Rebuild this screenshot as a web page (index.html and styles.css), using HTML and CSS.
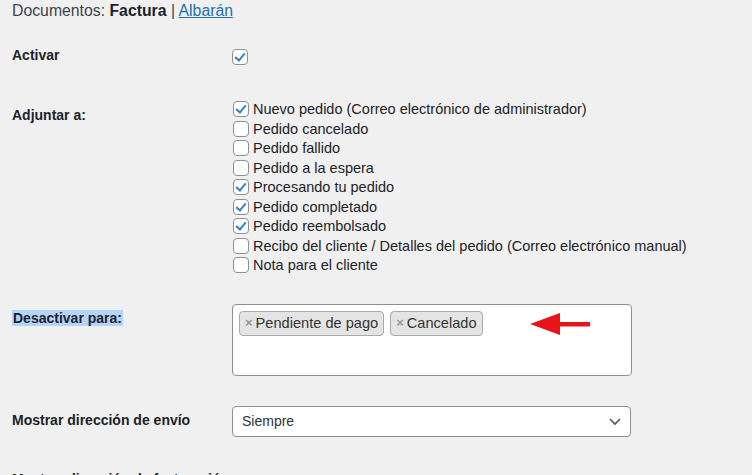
FILE: index.html
```html
<!DOCTYPE html>
<html lang="es">

<head>
  <meta charset="UTF-8">
  <meta name="viewport" content="width=device-width, initial-scale=1.0">
  <title>Ajustes de documentos</title>
  <link rel="stylesheet" href="styles.css">
</head>

<body>

  <div class="doc-switch">
    Documentos: <strong>Factura</strong> | <a href="#">Albarán</a>
  </div>

  <div class="form-row row-activar">
    <div class="row-label">Activar</div>
    <div class="row-field">
      <span class="check is-checked"></span>
    </div>
  </div>

  <div class="form-row row-adjuntar">
    <div class="row-label">Adjuntar a:</div>
    <ul class="check-list">
      <li><span class="check is-checked"></span>Nuevo pedido (Correo electrónico de administrador)</li>
      <li><span class="check"></span>Pedido cancelado</li>
      <li><span class="check"></span>Pedido fallido</li>
      <li><span class="check"></span>Pedido a la espera</li>
      <li><span class="check is-checked"></span>Procesando tu pedido</li>
      <li><span class="check is-checked"></span>Pedido completado</li>
      <li><span class="check is-checked"></span>Pedido reembolsado</li>
      <li><span class="check"></span>Recibo del cliente / Detalles del pedido (Correo electrónico manual)</li>
      <li><span class="check"></span>Nota para el cliente</li>
    </ul>
  </div>

  <div class="form-row row-desactivar">
    <div class="row-label"><span class="selected-text">Desactivar para:</span></div>
    <div class="multi-select">
      <span class="tag"><span class="tag-x">×</span>Pendiente de pago</span>
      <span class="tag"><span class="tag-x">×</span>Cancelado</span>
      <svg class="arrow" width="62" height="26" viewBox="0 0 62 26">
        <polygon points="0,12 30,1 30,23" fill="#e8141a" />
        <rect x="28" y="10" width="32" height="4.5" fill="#e8141a" />
      </svg>
    </div>
  </div>

  <div class="form-row row-envio">
    <div class="row-label">Mostrar dirección de envío</div>
    <div class="select-box">
      <span>Siempre</span>
      <svg width="14" height="10" viewBox="0 0 14 10">
        <path d="M2 3 L7 8 L12 3" fill="none" stroke="#50575e" stroke-width="1.6" />
      </svg>
    </div>
  </div>

  <div class="form-row row-facturacion">
    <div class="row-label">Mostrar dirección de facturación</div>
  </div>

</body>

</html>
```

FILE: styles.css
```css
body {
  font-family: "Liberation Sans", Arial, sans-serif;
  font-size: 14px;
  line-height: 20px;
  color: #1d2327;
  background-color: #f0f0f1;
  margin: 0;
  padding: 0 12px;
  overflow: hidden;
  height: 475px;
}

.doc-switch {
  color: #3c434a;
  font-size: 15.8px;
  padding-top: 1px;
}

.doc-switch strong {
  color: #1d2327;
}

.doc-switch a {
  color: #2271b1;
}

.form-row {
  display: flex;
}

.row-label {
  width: 220px;
  flex-shrink: 0;
  font-weight: bold;
}

.row-activar {
  margin-top: 24px;
}

.row-activar .row-field {
  padding-top: 2px;
}

.row-adjuntar {
  margin-top: 33px;
}

.row-adjuntar .row-label {
  padding-top: 5px;
}

.row-desactivar {
  margin-top: 28px;
}

.row-desactivar .row-label,
.row-envio .row-label {
  padding-top: 4px;
}

.row-envio {
  margin-top: 30px;
}

.row-facturacion {
  margin-top: 28px;
}

.row-facturacion .row-label {
  padding-top: 4px;
}

.selected-text {
  background-color: #b3d4fc;
  padding: 0 1px;
}

.check {
  display: inline-block;
  box-sizing: border-box;
  width: 16px;
  height: 16px;
  border: 1px solid #8c8f94;
  border-radius: 4px;
  background-color: #fff;
  vertical-align: middle;
  position: relative;
  top: -1px;
}

.check.is-checked::after {
  content: "";
  position: absolute;
  left: 4px;
  top: 1px;
  width: 4px;
  height: 8px;
  border: solid #3582c4;
  border-width: 0 2.3px 2.3px 0;
  transform: rotate(40deg);
}

.check-list {
  list-style: none;
  margin: 0;
  padding: 0;
  padding-left: 1px;
  font-size: 14.5px;
}

.check-list li {
  height: 19.5px;
  line-height: 19.5px;
  white-space: nowrap;
}

.check-list .check {
  margin-right: 4px;
}

.multi-select {
  position: relative;
  box-sizing: border-box;
  width: 400px;
  height: 72px;
  background-color: #fff;
  border: 1px solid #8c8f94;
  border-radius: 4px;
  padding: 6px 6px;
  display: flex;
  align-items: flex-start;
  gap: 6px;
}

.tag {
  display: inline-flex;
  align-items: center;
  height: 25px;
  box-sizing: border-box;
  padding: 0 5px 0 5px;
  background-color: #e4e4e4;
  border: 1px solid #aaa;
  border-radius: 4px;
  color: #333;
  font-size: 14.6px;
}

.tag-x {
  color: #999;
  font-weight: bold;
  font-size: 13px;
  margin-right: 3px;
}

.arrow {
  position: absolute;
  left: 297px;
  top: 7px;
}

.select-box {
  box-sizing: border-box;
  width: 399px;
  height: 31px;
  background-color: #fff;
  border: 1px solid #8c8f94;
  border-radius: 4px;
  padding: 0 8px 0 9px;
  display: flex;
  align-items: center;
  justify-content: space-between;
  color: #2c3338;
}
```
